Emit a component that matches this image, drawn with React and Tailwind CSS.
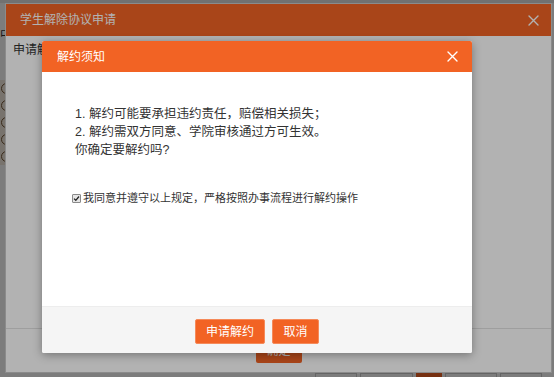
import React from 'react';

const CloseIcon = ({ className = '' }) => (
  <svg width="11" height="11" viewBox="0 0 11 11" className={className}>
    <path d="M1 1L10 10M10 1L1 10" stroke="currentColor" strokeWidth="1.4" strokeLinecap="round" />
  </svg>
);

const pages = [
  { w: 'w-[42px]', on: false },
  { w: 'w-[53px]', on: false },
  { w: 'w-[26px]', on: true },
  { w: 'w-[52px]', on: false },
  { w: 'w-[42px]', on: false },
];

export default function App() {
  return (
    <div className="relative w-[554px] h-[377px] overflow-hidden bg-white font-['Liberation_Sans','Noto_Sans_CJK_SC',sans-serif]">
      {/* page behind the dialogs */}
      <div className="flex flex-col h-full">
        <div className="h-[3px] bg-[#e8e8e8]" />
        <div className="pt-[25px] text-[12px] leading-[14px] text-[#333]">中</div>
        <div className="mt-[38px] w-[40px] bg-[#f6ede1] py-[3px] flex flex-col gap-[6px]">
          {[0, 1, 2, 3, 4].map((i) => (
            <span key={i} className="ml-[1px] w-[11px] h-[11px] rounded-full border border-[#7a5a3a]" />
          ))}
        </div>
        <div className="mt-auto flex gap-[3px] pl-[315px] h-[4px]">
          {pages.map((p, i) => (
            <span
              key={i}
              className={`${p.w} h-[24px] shrink-0 border ${p.on ? 'bg-[#f26324] border-[#f26324]' : 'bg-white border-[#cfcfcf]'}`}
            />
          ))}
        </div>
      </div>

      <div className="absolute inset-0 bg-black/30" />

      {/* outer dialog */}
      <div className="absolute left-[5px] top-[3px] w-[547px] h-[370px] bg-white border border-[#c8c8c8] flex flex-col">
        <div className="h-[32px] shrink-0 bg-[#f26324] flex items-center justify-between pl-[14px] pr-[12px] text-white">
          <span className="text-[12px]">学生解除协议申请</span>
          <CloseIcon />
        </div>
        <div className="flex-1 px-[7px] pt-[5px] text-[12px] leading-[18px] text-[#333]">申请解约</div>
        <div className="h-[44px] shrink-0 border-t border-[#e2e2e2] flex items-center justify-center">
          <button className="w-[46px] h-[25px] rounded-[2px] bg-[#f26324] text-white text-[12px]">确定</button>
        </div>
      </div>

      <div className="absolute inset-0 bg-black/30" />

      {/* notice dialog */}
      <div className="absolute left-[42px] top-[41px] w-[430px] h-[312px] rounded-[2px] overflow-hidden bg-white shadow-[0_2px_10px_rgba(0,0,0,0.35)] flex flex-col">
        <div className="h-[31px] shrink-0 bg-[#f26324] flex items-center justify-between pl-[15px] pr-[14px] text-white">
          <span className="text-[12px]">解约须知</span>
          <CloseIcon />
        </div>
        <div className="flex-1 pt-[33px] text-[#333]">
          <div className="pl-[33px] text-[12.5px] leading-[18px]">
            <p>1. 解约可能要承担违约责任，赔偿相关损失；</p>
            <p>2. 解约需双方同意、学院审核通过方可生效。</p>
            <p>你确定要解约吗?</p>
          </div>
          <label className="mt-[31px] pl-[30px] flex items-center gap-[2px] text-[11px] leading-[16px]">
            <span className="w-[9px] h-[9px] border border-[#8a8a8a] bg-[#e6e6e6] rounded-[1px] flex items-center justify-center">
              <svg width="7" height="7" viewBox="0 0 7 7">
                <path d="M1 3.6L2.8 5.3L6 1.5" fill="none" stroke="#222" strokeWidth="1.3" />
              </svg>
            </span>
            我同意并遵守以上规定，严格按照办事流程进行解约操作
          </label>
        </div>
        <div className="h-[47px] shrink-0 bg-[#f5f5f5] border-t border-[#ededed] flex items-center justify-center gap-[7px] pt-[3px]">
          <button className="w-[70px] h-[25px] rounded-[2px] bg-[#f26324] border border-[#f58a5a] text-white text-[12px]">申请解约</button>
          <button className="w-[47px] h-[25px] rounded-[2px] bg-[#f26324] border border-[#f58a5a] text-white text-[12px]">取消</button>
        </div>
      </div>
    </div>
  );
}
